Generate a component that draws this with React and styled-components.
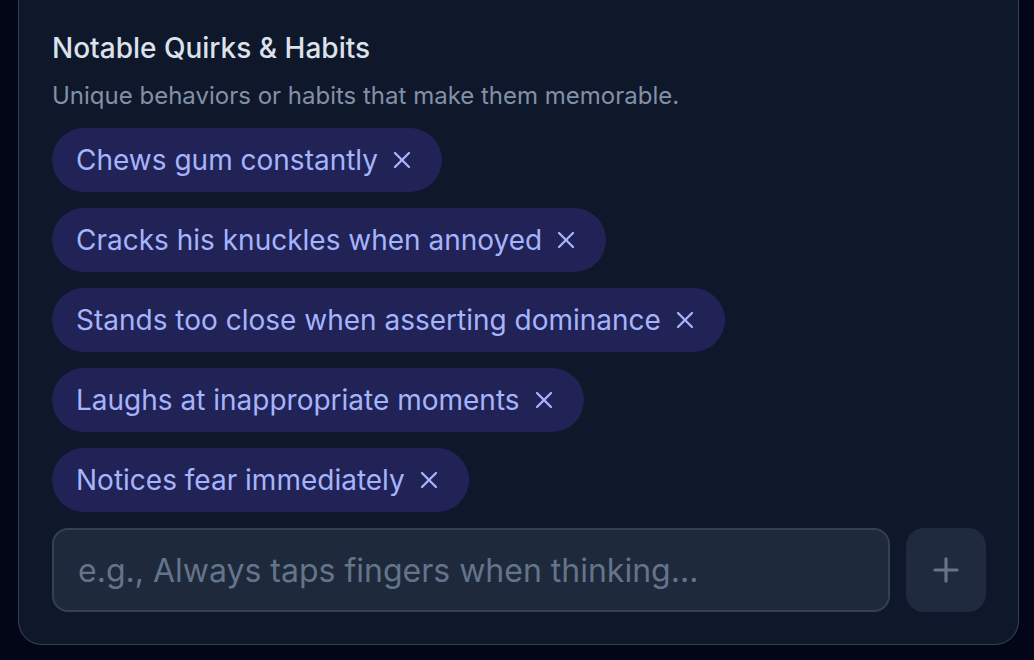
import React from 'react'
import styled, { createGlobalStyle } from 'styled-components'
import { X, Plus } from 'lucide-react'

const quirks = [
  'Chews gum constantly',
  'Cracks his knuckles when annoyed',
  'Stands too close when asserting dominance',
  'Laughs at inappropriate moments',
  'Notices fear immediately',
]

export default function App() {
  return (
    <>
      <GlobalStyle />
      <Page>
        <Card>
          <Title>Notable Quirks &amp; Habits</Title>
          <Subtitle>Unique behaviors or habits that make them memorable.</Subtitle>

          <ChipList>
            {quirks.map((q) => (
              <Chip key={q}>
                <span>{q}</span>
                <RemoveButton aria-label={`Remove ${q}`}>
                  <X size={28} strokeWidth={2} />
                </RemoveButton>
              </Chip>
            ))}
          </ChipList>

          <InputRow>
            <TextInput placeholder="e.g., Always taps fingers when thinking..." />
            <AddButton aria-label="Add quirk">
              <Plus size={38} strokeWidth={2} />
            </AddButton>
          </InputRow>
        </Card>
      </Page>
    </>
  )
}

const GlobalStyle = createGlobalStyle`
  html, body {
    margin: 0;
    background: #020617;
    font-family: Inter, "Noto Sans", sans-serif;
  }
`

const Page = styled.div`
  box-sizing: border-box;
  width: 1034px;
  height: 660px;
  padding: 0 15px 15px 18px;
  overflow: hidden;
  display: flex;
  flex-direction: column;
  justify-content: flex-end;
`

const Card = styled.div`
  display: flex;
  flex-direction: column;
  background: #0f172a;
  border: 1px solid #334155;
  border-top: none;
  border-radius: 0 0 24px 24px;
  padding: 28px 32px 32px 33px;
`

const Title = styled.div`
  font-size: 28px;
  line-height: 40px;
  font-weight: 500;
  color: #dbe2ec;
  margin-bottom: 12px;
`

const Subtitle = styled.div`
  font-size: 24px;
  line-height: 32px;
  color: #8391a7;
`

const ChipList = styled.div`
  display: flex;
  flex-direction: column;
  align-items: flex-start;
  gap: 16px;
  margin-top: 16px;
`

const Chip = styled.div`
  display: inline-flex;
  align-items: center;
  gap: 10px;
  height: 64px;
  box-sizing: border-box;
  padding: 0 26px 0 24px;
  border-radius: 9999px;
  background: #212256;
  color: #a5b4fc;
  font-size: 28px;
  line-height: 40px;
`

const RemoveButton = styled.button`
  display: flex;
  align-items: center;
  justify-content: center;
  padding: 0;
  border: none;
  background: none;
  color: #a5b4fc;
  cursor: pointer;
`

const InputRow = styled.div`
  display: flex;
  gap: 16px;
  margin-top: 16px;
`

const TextInput = styled.input`
  flex: 1;
  height: 84px;
  box-sizing: border-box;
  padding: 0 24px;
  border: 2px solid #334155;
  border-radius: 16px;
  background: #1e293b;
  color: #e2e8f0;
  font-family: Inter, "Noto Sans", sans-serif;
  font-size: 32px;
  outline: none;

  &::placeholder {
    color: #64748b;
  }
`

const AddButton = styled.button`
  width: 80px;
  height: 84px;
  display: flex;
  align-items: center;
  justify-content: center;
  border: none;
  border-radius: 18px;
  background: #1f2a3e;
  color: #64748b;
  cursor: pointer;
`
